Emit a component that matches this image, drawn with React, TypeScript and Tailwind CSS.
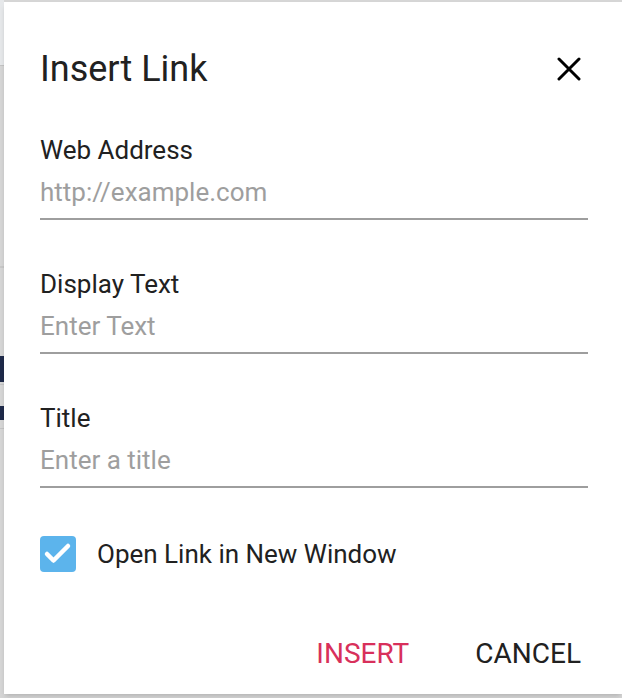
import { useState } from 'react';

function Field({ label, placeholder }: { label: string; placeholder: string }) {
  return (
    <div className="flex flex-col">
      <label className="text-[26px] leading-[32px] text-[#212121]">{label}</label>
      <input
        type="text"
        placeholder={placeholder}
        className="mt-[10px] h-[44px] pt-0 pb-[10px] leading-[32px] text-[26px] text-[#212121] placeholder:text-[#9e9e9e] border-b-2 border-[#9e9e9e] outline-none bg-transparent"
      />
    </div>
  );
}

export default function App() {
  const [checked, setChecked] = useState(true);

  return (
    <div className="relative h-[698px] w-[622px] overflow-hidden bg-[#d6d6d6]" style={{ fontFamily: 'Roboto, "Noto Sans", sans-serif' }}>
      {/* page behind the dialog, only a sliver shows */}
      <div className="flex flex-col w-[4px]">
        <div className="h-[66px] bg-[#e6e8ea] border-b border-[#c4c4c4]" />
        <div className="h-[200px]" />
        <div className="h-[2px] bg-[#c8c8c8]" />
        <div className="h-[88px]" />
        <div className="h-[26px] bg-[#1f2a4a]" />
        <div className="h-[8px] border-t border-[#c4c4c4] mt-[2px]" />
        <div className="h-[14px] mt-[14px] bg-[#1f2a4a]" />
        <div className="h-[240px] border-t border-[#c4c4c4] mt-[8px]" />
      </div>

      {/* dialog */}
      <div className="absolute left-[4px] top-[2px] w-[618px] h-[692px] bg-white shadow-md pl-[36px] pr-[34px] pt-[47px] flex flex-col">
        <div className="flex items-center justify-between h-[40px] pr-[7px]">
          <h2 className="text-[36px] leading-[40px] text-[#212121]">Insert Link</h2>
          <button className="w-[24px] h-[24px] flex items-center justify-center" aria-label="Close">
            <svg width="24" height="24" viewBox="0 0 24 24" fill="none" stroke="#000" strokeWidth="3" strokeLinecap="round">
              <path d="M2 2 L22 22 M22 2 L2 22" />
            </svg>
          </button>
        </div>

        <div className="mt-[45px] flex flex-col gap-[48px]">
          <Field label="Web Address" placeholder="http://example.com" />
          <Field label="Display Text" placeholder="Enter Text" />
          <Field label="Title" placeholder="Enter a title" />
        </div>

        <label className="mt-[48px] flex items-center gap-[21px] cursor-pointer select-none">
          <span
            onClick={() => setChecked(!checked)}
            className={`w-[36px] h-[36px] rounded-[4px] flex items-center justify-center ${checked ? 'bg-[#5cb4ec]' : 'border-2 border-[#9e9e9e]'}`}
          >
            {checked && (
              <svg width="36" height="36" viewBox="0 0 36 36" fill="none" stroke="#fff" strokeWidth="4.5" strokeLinecap="round" strokeLinejoin="round">
                <path d="M7 18 L13.5 24.5 L28 10" />
              </svg>
            )}
          </span>
          <span className="text-[26px] leading-[32px] text-[#212121]">Open Link in New Window</span>
        </label>

        <div className="mt-[64px] flex justify-end gap-[66px] pr-[7px]">
          <button className="text-[28px] leading-[36px] text-[#d8305b]">INSERT</button>
          <button className="text-[28px] leading-[36px] text-[#212121]">CANCEL</button>
        </div>
      </div>
    </div>
  );
}
